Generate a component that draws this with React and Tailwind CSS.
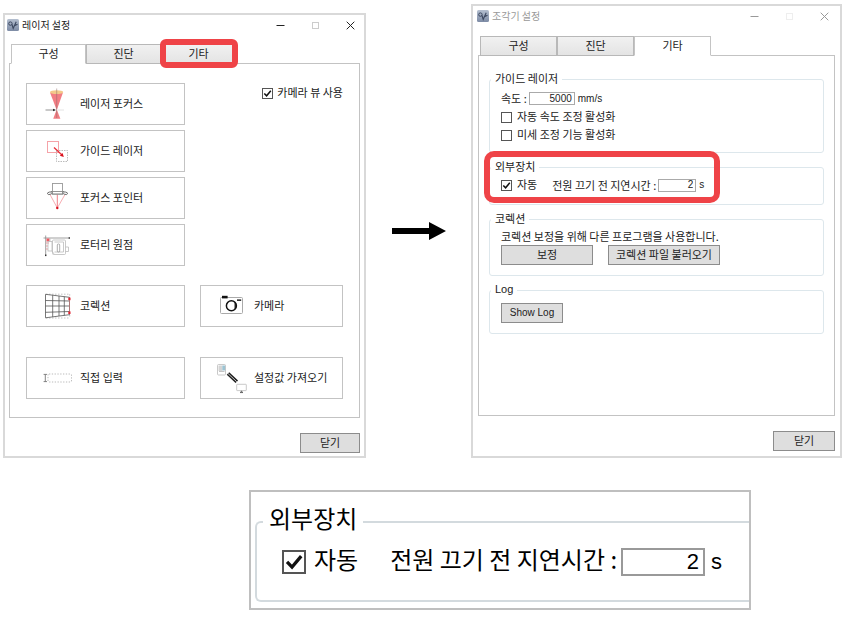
import { useState } from "react";

const FONT = "font-['Noto_Sans_CJK_KR',sans-serif]";
const LATIN = "font-['Liberation_Sans','Noto_Sans_CJK_KR',sans-serif]";

function AppIcon() {
  return (
    <svg viewBox="0 0 12 12" className="w-3 h-3 shrink-0">
      <defs>
        <linearGradient id="appIcon" x1="0" y1="0" x2="0" y2="1">
          <stop offset="0" stopColor="#b4bfd0" />
          <stop offset="1" stopColor="#7d8ba5" />
        </linearGradient>
      </defs>
      <rect width="12" height="12" rx="1.5" fill="url(#appIcon)" />
      <circle cx="3.4" cy="4.6" r="1.7" fill="none" stroke="#3a465e" />
      <path d="M5 5.5 L6.2 9.5 L9.2 2.8 M6.8 7 L10.5 5.2" fill="none" stroke="#3a465e" strokeWidth="1.1" />
    </svg>
  );
}

function FocusIcon() {
  return (
    <svg viewBox="0 0 32 32" className="w-8 h-8 shrink-0">
      <path d="M10 4.5 L23 4.5 L17.5 20 L16.7 22 L15.9 20 Z" fill="#f27d83" />
      <path d="M16.7 21.5 L20.4 30.7 L13.2 30.7 Z" fill="#f27d83" />
      <ellipse cx="16.6" cy="4.2" rx="6.6" ry="1.9" fill="#f3c98a" />
      <path d="M16.7 0.5 V30" stroke="#8d6a6a" strokeWidth="0.5" />
      <path d="M5.5 22 H15" stroke="#777" strokeWidth="0.8" />
      <path d="M13 20.8 L16 22 L13 23.2 Z" fill="#333" />
      <path d="M18 22 H24" stroke="#ddd" strokeWidth="0.8" />
    </svg>
  );
}

function GuideIcon() {
  return (
    <svg viewBox="0 0 32 32" className="w-8 h-8 shrink-0" fill="none">
      <rect x="7.5" y="6.5" width="11" height="11" stroke="#f5a3a8" />
      <rect x="16.5" y="15.5" width="11" height="11" stroke="#aaa" strokeDasharray="1.5 1" strokeWidth="0.8" />
      <path d="M14 12.5 L22 20" stroke="#e8303a" strokeWidth="1.3" />
      <path d="M23.8 22 L19.8 20.8 L22.6 18 Z" fill="#d8101c" />
    </svg>
  );
}

function PointerIcon() {
  return (
    <svg viewBox="0 0 32 32" className="w-8 h-8 shrink-0" fill="none">
      <path d="M10 12.5 L17.3 26 L25 12.5" stroke="#f5a3a8" strokeWidth="0.9" />
      <path d="M17.3 12.5 V26" stroke="#ee7079" strokeWidth="0.9" />
      <rect x="12.5" y="1.5" width="10" height="10.5" stroke="#999" strokeWidth="0.9" />
      <path d="M11 9.5 H24 M12 12.2 H23" stroke="#888" strokeWidth="0.9" />
      <ellipse cx="9.8" cy="11.2" rx="2.4" ry="1.2" stroke="#666" strokeWidth="0.9" transform="rotate(-12 9.8 11.2)" />
      <ellipse cx="25.2" cy="11.2" rx="2.4" ry="1.2" stroke="#666" strokeWidth="0.9" transform="rotate(12 25.2 11.2)" />
      <circle cx="17.3" cy="26" r="1.2" fill="#d8101c" />
    </svg>
  );
}

function RotaryIcon() {
  return (
    <svg viewBox="0 0 32 32" className="w-8 h-8 shrink-0" fill="none" stroke="#bbb" strokeWidth="0.8">
      <path d="M3.5 9 H30 M5.7 6.5 V27" stroke="#888" />
      <rect x="28.6" y="8.3" width="1.4" height="1.4" fill="#333" stroke="none" />
      <rect x="5" y="25.5" width="1.4" height="1.6" fill="#333" stroke="none" />
      <rect x="6.5" y="9.5" width="3" height="3" fill="#ef5a63" stroke="none" />
      <path d="M6 14 H9 M6 17 H8 M6 20 H8" stroke="#ee8a90" />
      <rect x="8" y="12.5" width="4" height="9.5" />
      <rect x="12.5" y="11" width="13" height="14.5" rx="1" />
      <path d="M14.5 13 H23.5 V23 H14.5 M10 9.5 V12 M12 22 L14 25" />
      <rect x="17.3" y="15" width="2.4" height="8" rx="1" stroke="#999" />
      <path d="M25.5 18 H28.5 V22.5 H25.5" />
    </svg>
  );
}

function CorrectionIcon() {
  return (
    <svg viewBox="0 0 32 32" className="w-8 h-8 shrink-0" fill="none">
      <path d="M6 4.2 H29.7 M6 28 H29.7 M29.7 4.2 V7 M29.7 25 V28" stroke="#aaa" strokeWidth="0.7" strokeDasharray="1.5 1.5" />
      <path
        d="M5.5 4.3 L29.5 7.3 V24.7 L5.5 27.8 Z M12.7 5.2 V26.9 M19 6 V26 M24.3 6.7 V25.4 M5.5 10.5 L29.5 11 M5.5 16 H29.5 M5.5 22.3 L29.5 21.5"
        stroke="#555"
        strokeWidth="0.8"
      />
      <rect x="28.3" y="7.6" width="2.2" height="2.6" fill="#e0202c" />
      <rect x="28.3" y="21.4" width="2.2" height="2.6" fill="#e0202c" />
      <path d="M29.5 10 V21.5" stroke="#b77" strokeWidth="0.8" />
    </svg>
  );
}

function DirectInputIcon() {
  return (
    <svg viewBox="0 0 32 32" className="w-8 h-8 shrink-0" fill="none">
      <path d="M3.6 12.4 H7 M3.6 19.6 H7 M5.3 12.4 V19.6" stroke="#777" strokeWidth="0.9" />
      <rect x="8" y="12" width="23.5" height="8" rx="1" stroke="#aaa" strokeWidth="0.8" strokeDasharray="1.3 1.5" />
    </svg>
  );
}

function CameraIcon() {
  return (
    <svg viewBox="0 0 32 32" className="w-8 h-8 shrink-0" fill="none">
      <rect x="6.5" y="7.5" width="22" height="16" rx="1" stroke="#aaa" />
      <rect x="8" y="5.8" width="5.6" height="2.6" fill="#111" />
      <rect x="23" y="9.4" width="4.2" height="1.5" fill="#222" />
      <path d="M20.5 11.5 A5.5 5.5 0 0 1 20.5 20 Z" fill="#333" />
      <circle cx="17.4" cy="15.7" r="5" stroke="#111" strokeWidth="1.5" />
    </svg>
  );
}

function ImportIcon() {
  return (
    <svg viewBox="0 0 32 32" className="w-8 h-8 shrink-0 overflow-visible" fill="none">
      <rect x="3.5" y="2.5" width="8" height="10.5" rx="1" stroke="#bbb" strokeWidth="0.8" />
      <rect x="4.5" y="3.5" width="3.8" height="5.5" fill="#d4d4d4" />
      <rect x="8.3" y="3.5" width="2.8" height="5" fill="#9cc4d3" />
      <path d="M5 9.5 H10.5" stroke="#aaa" strokeWidth="0.7" />
      <path d="M14 11.5 L22.8 19.8" stroke="#1d1d1d" strokeWidth="3.6" />
      <path d="M14 11.5 L22.8 19.8" stroke="#ddd" strokeWidth="0.9" />
      <rect x="22.7" y="22.3" width="9.6" height="6.3" rx="0.5" stroke="#bbb" strokeWidth="0.8" />
      <path d="M26 30.6 H29 L27.5 29.2 Z" fill="#444" stroke="#444" strokeWidth="0.6" />
    </svg>
  );
}

function Checkbox({ id, defaultChecked, large }) {
  return (
    <span className={`relative block shrink-0 ${large ? "w-6 h-6" : "w-[11px] h-[11px]"}`}>
      <input
        id={id}
        type="checkbox"
        defaultChecked={defaultChecked}
        className={`peer block w-full h-full appearance-none bg-white border-[#555] ${large ? "border-2" : "border"}`}
      />
      <svg viewBox="0 0 11 11" className="absolute inset-0 w-full h-full hidden peer-checked:block pointer-events-none">
        <path d="M2.3 5.4 L4.6 7.8 L8.8 2.8" fill="none" stroke="#111" strokeWidth="1.5" />
      </svg>
    </span>
  );
}

function TitleBar({ title, inactive }) {
  return (
    <div className={`h-5 flex items-center justify-between ${inactive ? "pl-1 pr-[11px]" : "pl-[2px] pr-[9px]"}`}>
      <div className="flex items-center gap-[3px]">
        <AppIcon />
        <h2 className={`pb-px text-[10px] leading-[14px] ${inactive ? "text-[#999]" : "text-[#222]"}`}>{title}</h2>
      </div>
      <div className={`flex items-center gap-[26px] ${inactive ? "text-[#999]" : "text-[#222]"}`}>
        <button type="button" aria-label="최소화">
          <svg viewBox="0 0 9 9" className="w-[9px] h-[9px] block"><path d="M0.5 4.5 H8.5" stroke="currentColor" /></svg>
        </button>
        <button type="button" aria-label="최대화" disabled>
          <svg viewBox="0 0 9 9" className="w-[9px] h-[9px] block">
            <rect x="1.5" y="1.5" width="6" height="6" fill="none" stroke={inactive ? "#eee" : "#ccc"} />
          </svg>
        </button>
        <button type="button" aria-label="창 닫기">
          <svg viewBox="0 0 9 9" className="w-[9px] h-[9px] block"><path d="M0.7 0.7 L8.3 8.3 M8.3 0.7 L0.7 8.3" stroke="currentColor" /></svg>
        </button>
      </div>
    </div>
  );
}

function Tabs({ initial, tabClass, highlight }) {
  const [active, setActive] = useState(initial);
  const tabs = ["구성", "진단", "기타"];

  return (
    <div role="tablist" className="flex pl-[2px] relative z-10">
      {tabs.map((tab) => (
        <div key={tab} className={`relative ${tabClass}`}>
          <button
            type="button"
            role="tab"
            aria-selected={active === tab}
            onClick={() => setActive(tab)}
            className={`block w-full h-5 pb-[2px] border text-[11px] leading-[14px] text-[#222] ${
              active === tab
                ? "bg-white border-[#c4c4c4] border-b-white"
                : "bg-linear-to-b from-[#f1f1f1] to-[#e4e4e4] border-[#b8b8b8]"
            }`}
          >
            {tab}
          </button>
          {highlight === tab && (
            <div className="absolute -top-[5px] -left-px -right-[2px] h-[29px] border-[6px] border-[#ef4347] rounded-md pointer-events-none"></div>
          )}
        </div>
      ))}
    </div>
  );
}

function MenuButton({ icon, label }) {
  return (
    <button
      type="button"
      className="w-full h-[42px] pl-[13px] flex items-center gap-2 border border-[#c3c3c3] bg-white text-[11px] leading-[14px] text-[#222] whitespace-nowrap"
    >
      {icon}
      <span className="pb-[2px]">{label}</span>
    </button>
  );
}

function GrayButton({ children, className }) {
  return (
    <button
      type="button"
      className={`block h-5 pb-[2px] border border-[#8c8c8c] bg-[#dedede] text-[11px] leading-[14px] text-[#222] whitespace-nowrap ${className}`}
    >
      {children}
    </button>
  );
}

function Group({ title, latin, className, children }) {
  return (
    <fieldset className={`border border-[#dde7ec] rounded-[3px] pl-[11px] text-[11px] leading-[14px] text-[#222] ${className}`}>
      <legend className={`-ml-[10px] px-1 pb-[2px] leading-3 ${latin ? LATIN : ""}`}>{title}</legend>
      {children}
    </fieldset>
  );
}

function LaserSettings() {
  return (
    <section className="mt-[9px] border-2 border-[#d9d9d9] flex flex-col">
      <TitleBar title="레이저 설정" />
      <div className="px-1 pt-[9px] flex-1 flex flex-col">
        <Tabs initial="구성" tabClass="w-[75px]" highlight="기타" />
        <div className="-mt-px flex-1 border border-[#c3c3c3] pt-[19px] pb-[18px] px-4">
          <div className="grid grid-cols-[159fr_143fr] gap-x-[15px]">
            <div className="flex flex-col gap-[5px]">
              <MenuButton icon={<FocusIcon />} label="레이저 포커스" />
              <MenuButton icon={<GuideIcon />} label="가이드 레이저" />
              <MenuButton icon={<PointerIcon />} label="포커스 포인터" />
              <MenuButton icon={<RotaryIcon />} label="로터리 원점" />
            </div>
            <div className="flex items-center justify-end gap-1 h-5">
              <Checkbox id="camera-view" defaultChecked />
              <label htmlFor="camera-view" className="pb-[2px] text-[11px] leading-[14px] text-[#222]">카메라 뷰 사용</label>
            </div>
          </div>
          <div className="mt-[19px] grid grid-cols-[159fr_143fr] gap-x-[15px] gap-y-[30px]">
            <MenuButton icon={<CorrectionIcon />} label="코렉션" />
            <MenuButton icon={<CameraIcon />} label="카메라" />
            <MenuButton icon={<DirectInputIcon />} label="직접 입력" />
            <MenuButton icon={<ImportIcon />} label="설정값 가져오기" />
          </div>
        </div>
        <div className="pt-[15px] pb-[3px] flex justify-end">
          <GrayButton className="w-[60px]">닫기</GrayButton>
        </div>
      </div>
    </section>
  );
}

function EngraverSettings() {
  return (
    <section className="border-2 border-[#d9d9d9] flex flex-col">
      <TitleBar title="조각기 설정" inactive />
      <div className="px-[5px] pt-[10px] flex-1 flex flex-col">
        <Tabs initial="기타" tabClass="w-[77px]" />
        <div className="-mt-px flex-1 border border-[#c3c3c3] pt-4 px-[10px] flex flex-col gap-[7px]">
          <Group title="가이드 레이저" className="pt-[5px] pb-[10px]">
            <div className="flex flex-col gap-1">
              <div className="flex items-center">
                <label htmlFor="speed" className="pb-px">속도 :</label>
                <input id="speed" defaultValue="5000" className={`ml-[2px] mr-[3px] w-[46px] h-[13px] pr-[2px] border border-[#aaa] text-right text-[10px] ${LATIN}`} />
                <span className={`text-[10px] ${LATIN}`}>mm/s</span>
              </div>
              <div className="flex items-center gap-[5px] h-[14px]">
                <Checkbox id="auto-speed" />
                <label htmlFor="auto-speed" className="pb-[2px]">자동 속도 조정 활성화</label>
              </div>
              <div className="flex items-center gap-[5px] h-[14px]">
                <Checkbox id="fine-tune" />
                <label htmlFor="fine-tune" className="pb-[2px]">미세 조정 기능 활성화</label>
              </div>
            </div>
          </Group>

          <div className="relative">
            <Group title="외부장치" className="pt-1 pb-3">
              <div className="flex items-center h-[14px]">
                <Checkbox id="external-auto" defaultChecked />
                <label htmlFor="external-auto" className="ml-[5px] pb-[2px]">자동</label>
                <label htmlFor="delay" className="ml-[15px] pb-px">전원 끄기 전 지연시간 :</label>
                <input id="delay" defaultValue="2" className={`ml-[2px] mr-[3px] w-[38px] h-[13px] pr-[2px] border border-[#aaa] text-right text-[10px] ${LATIN}`} />
                <span className={`text-[10px] ${LATIN}`}>s</span>
              </div>
            </Group>
            <div className="absolute -left-[5px] -top-[9px] w-[236px] h-[52px] border-[6px] border-[#ef4347] rounded-[10px] pointer-events-none"></div>
          </div>

          <Group title="코렉션" className="pt-[3px] pb-[10px]">
            <p>코렉션 보정을 위해 다른 프로그램을 사용합니다.</p>
            <div className="mt-[2px] flex gap-[15px]">
              <GrayButton className="w-[92px]">보정</GrayButton>
              <GrayButton className="w-[112px]">코렉션 파일 불러오기</GrayButton>
            </div>
          </Group>

          <Group title="Log" latin className="pt-[6px] pb-[10px]">
            <GrayButton className={`w-[62px] ${LATIN}`}>
              <span className="text-[10px]">Show Log</span>
            </GrayButton>
          </Group>
        </div>
        <div className="pt-[15px] pb-[5px] flex justify-end">
          <GrayButton className="w-[62px]">닫기</GrayButton>
        </div>
      </div>
    </section>
  );
}

function DelayCloseUp() {
  return (
    <section className="mt-8 ml-[246px] w-[502px] max-w-full border-2 border-[#bfbfbf] pt-4 pl-1 pb-[6px]">
      <fieldset className="border-2 border-r-0 border-[#d3dade] rounded-l-md pl-[25px] pt-3 pb-6 text-[24px] leading-7 text-black">
        <legend className="-ml-[19px] px-[6px] pb-2 leading-5">외부장치</legend>
        <div className="flex items-center h-7 whitespace-nowrap">
          <Checkbox id="zoom-auto" defaultChecked large />
          <label htmlFor="zoom-auto" className="ml-2 pb-[6px]">자동</label>
          <label htmlFor="zoom-delay" className="ml-8 pb-[6px]">전원 끄기 전 지연시간 :</label>
          <input id="zoom-delay" defaultValue="2" className={`ml-1 w-[84px] h-7 pr-1 border-2 border-[#999] text-right text-[22px] ${LATIN}`} />
          <span className={`ml-[6px] text-[22px] ${LATIN}`}>s</span>
        </div>
      </fieldset>
    </section>
  );
}

function App() {
  return (
    <main className={`min-h-screen bg-white pt-1 pl-[3px] pr-1 ${FONT}`}>
      <div className="grid grid-cols-[363fr_105fr_371fr]">
        <LaserSettings />
        <div className="flex items-center justify-center">
          <svg viewBox="0 0 54 18" className="w-[54px] h-[18px]">
            <path d="M0 6 H37 V0 L54 9 L37 18 V12 H0 Z" fill="#000" />
          </svg>
        </div>
        <EngraverSettings />
      </div>
      <DelayCloseUp />
    </main>
  );
}

export default App;
